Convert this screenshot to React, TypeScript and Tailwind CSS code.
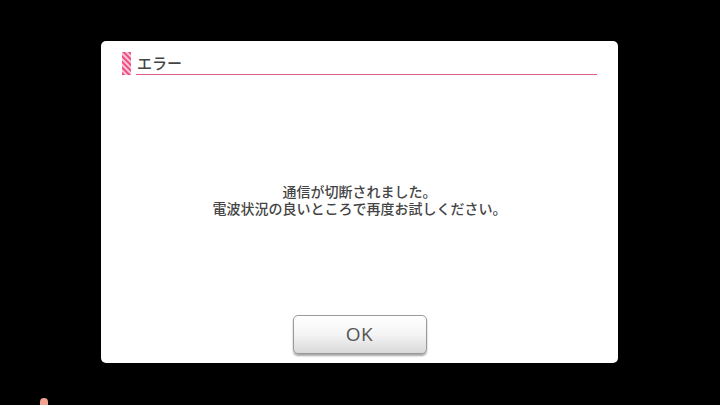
const jpFont = {
  fontFamily: '"Noto Sans CJK JP", "Noto Sans", sans-serif',
};

function StripeMark() {
  return (
    <svg width="9" height="23" viewBox="0 0 9 23" className="shrink-0">
      <defs>
        <pattern id="stripes" width="4" height="4" patternUnits="userSpaceOnUse" patternTransform="rotate(-45)">
          <rect width="4" height="4" fill="#fbd3e0" />
          <rect width="2.2" height="4" fill="#ec4f86" />
        </pattern>
      </defs>
      <rect width="9" height="23" fill="url(#stripes)" />
    </svg>
  );
}

export default function App() {
  return (
    <div className="relative w-[720px] h-[405px] bg-black overflow-hidden" style={jpFont}>
      <div className="pt-[41px] pl-[101px]">
        {/* ダイアログ本体 */}
        <div className="w-[517px] h-[322px] bg-white rounded-[5px] flex flex-col">
          <div className="flex items-end gap-[5px] pt-[11px] pl-[21px] pr-[21px]">
            <StripeMark />
            <div className="flex-1 border-b border-[#e2578a] h-[23px] flex items-center">
              <span className="text-[15px] leading-none font-medium text-[#444] pl-[1px] -mt-[1px]">エラー</span>
            </div>
          </div>

          <div className="flex-1 flex flex-col items-center justify-center text-center text-[14px] leading-[17px] font-medium text-[#444] pt-[10px]">
            <p>通信が切断されました。</p>
            <p>電波状況の良いところで再度お試しください。</p>
          </div>

          <div className="flex justify-center pb-[9px]">
            <button className="w-[134px] h-[39px] rounded-[5px] border border-[#9a9a9a] bg-gradient-to-b from-white via-[#f4f4f4] to-[#d9d9d9] shadow-[0_2px_2px_rgba(0,0,0,0.35)] text-[19px] font-medium text-[#555] tracking-wide"
              style={{ fontFamily: '"Open Sans", "Noto Sans", sans-serif' }}>
              OK
            </button>
          </div>
        </div>
      </div>

      {/* 画面下のキャラの頭 */}
      <div className="absolute left-[40px] top-[398px] w-[8px] h-[10px] rounded-full bg-[#f0a28e]" />
    </div>
  );
}
